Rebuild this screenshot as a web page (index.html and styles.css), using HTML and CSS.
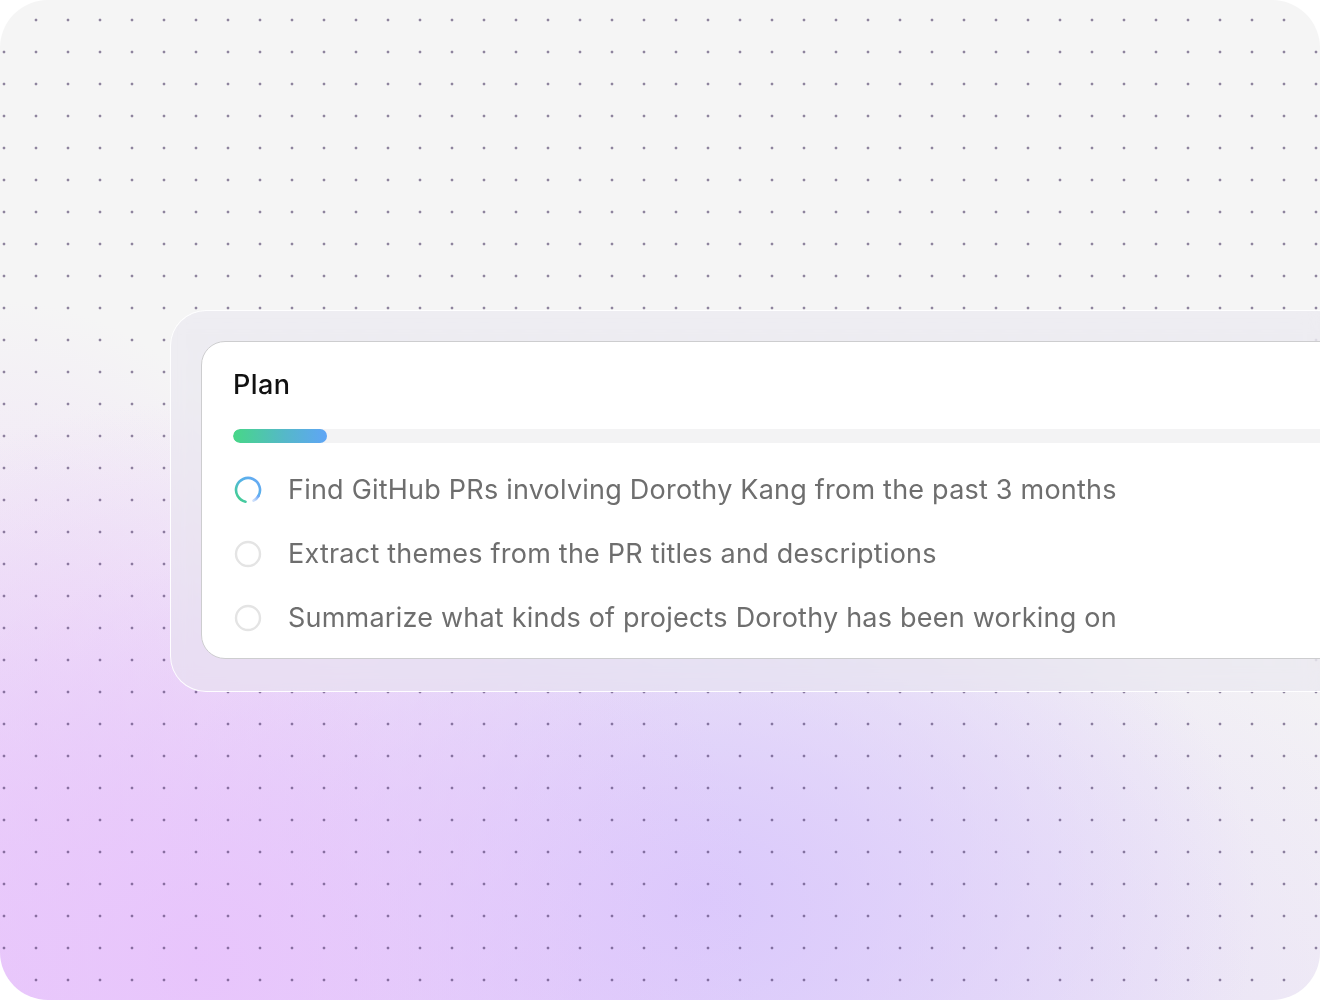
FILE: index.html
```html
<!DOCTYPE html>
<html>
<head>
<meta charset="utf-8">
<link rel="stylesheet" href="styles.css">
</head>
<body>
<div class="frame">
  <div class="dots"></div>
  <div class="glass">
    <div class="card">
      <h2 class="title">Plan</h2>
      <div class="progress"><div class="fill" style="width:94px"></div></div>
      <ul class="steps">
        <li class="step active">
          <svg class="icon" viewBox="0 0 28 28" width="28" height="28">
            <defs>
              <linearGradient id="spin" x1="0" y1="1" x2="1" y2="0">
                <stop offset="0" stop-color="#3fd47f"/>
                <stop offset="0.55" stop-color="#55b3e6"/>
                <stop offset="1" stop-color="#6aa6f7"/>
              </linearGradient>
              <linearGradient id="tail" x1="1" y1="0" x2="0" y2="1">
                <stop offset="0" stop-color="#6aa6f7"/>
                <stop offset="1" stop-color="#cfe0fb"/>
              </linearGradient>
            </defs>
            <path d="M 11.5 25.7 A 12 12 0 1 1 24.4 20" fill="none" stroke="url(#spin)" stroke-width="2.6" stroke-linecap="round"/>
            <path d="M 24.4 20 A 12 12 0 0 1 19.5 24.7" fill="none" stroke="url(#tail)" stroke-width="2.6" stroke-linecap="round"/>
          </svg>
          <span>Find GitHub PRs involving Dorothy Kang from the past 3 months</span>
        </li>
        <li class="step">
          <svg class="icon" viewBox="0 0 28 28" width="28" height="28"><circle cx="14" cy="14" r="12" fill="none" stroke="#e4e4e4" stroke-width="2.4"/></svg>
          <span>Extract themes from the PR titles and descriptions</span>
        </li>
        <li class="step">
          <svg class="icon" viewBox="0 0 28 28" width="28" height="28"><circle cx="14" cy="14" r="12" fill="none" stroke="#e4e4e4" stroke-width="2.4"/></svg>
          <span>Summarize what kinds of projects Dorothy has been working on</span>
        </li>
      </ul>
    </div>
  </div>
</div>
</body>
</html>
```

FILE: styles.css
```css
html, body {
  margin: 0;
  padding: 0;
  background: #ffffff;
}

body {
  font-family: Inter, "Noto Sans", "Liberation Sans", sans-serif;
}

.frame {
  position: relative;
  width: 1320px;
  height: 1000px;
  border-radius: 48px;
  overflow: hidden;
  box-sizing: border-box;
  padding-top: 310px;
  padding-left: 170px;
  background:
    radial-gradient(ellipse 560px 560px at 200px 960px, rgba(232, 196, 252, 0.95), rgba(232, 196, 252, 0) 100%),
    radial-gradient(ellipse 560px 400px at 700px 900px, rgba(218, 200, 252, 0.95), rgba(218, 200, 252, 0) 100%),
    radial-gradient(ellipse 420px 700px at 0px 1000px, rgba(232, 200, 250, 0.9), rgba(232, 200, 250, 0) 100%),
    radial-gradient(ellipse 900px 500px at 600px 1000px, rgba(222, 206, 250, 0.8), rgba(222, 206, 250, 0) 100%),
    linear-gradient(180deg, #f5f5f5 0%, #f5f5f5 40%, #f1eef5 100%);
}

.dots {
  position: absolute;
  inset: 0;
  background-image: radial-gradient(circle at 4px 4px, rgba(40, 20, 70, 0.5) 1.2px, rgba(0, 0, 0, 0) 1.7px);
  background-size: 32px 32px;
  background-position: 0 16px;
}

.glass {
  position: relative;
  width: 1300px;
  box-sizing: border-box;
  padding: 30px 30px 32px 30px;
  border: 1px solid rgba(255, 255, 255, 0.95);
  border-radius: 36px;
  background: rgba(232, 230, 238, 0.55);
  backdrop-filter: blur(10px);
  -webkit-backdrop-filter: blur(10px);
}

.card {
  background: #ffffff;
  border: 1.5px solid #cdcdcf;
  border-radius: 24px;
  padding: 27px 0 8px 31px;
}

.title {
  margin: 0;
  font-size: 27px;
  line-height: 32px;
  font-weight: 500;
  color: #111111;
  letter-spacing: 0.4px;
}

.progress {
  margin-top: 28px;
  height: 14px;
  border-radius: 7px 0 0 7px;
  background: #f3f3f4;
  overflow: hidden;
}

.fill {
  height: 14px;
  border-radius: 7px;
  background: linear-gradient(90deg, #47d787 0%, #55b8c9 55%, #5fa5f6 100%);
}

.steps {
  list-style: none;
  margin: 15px 0 0 0;
  padding: 0;
}

.step {
  display: flex;
  align-items: center;
  gap: 26px;
  height: 64px;
}

.icon {
  flex: 0 0 auto;
  margin-left: 1px;
}

.step span {
  font-size: 27px;
  line-height: 32px;
  color: #6e6e6e;
  letter-spacing: 0.22px;
  white-space: nowrap;
}
```
